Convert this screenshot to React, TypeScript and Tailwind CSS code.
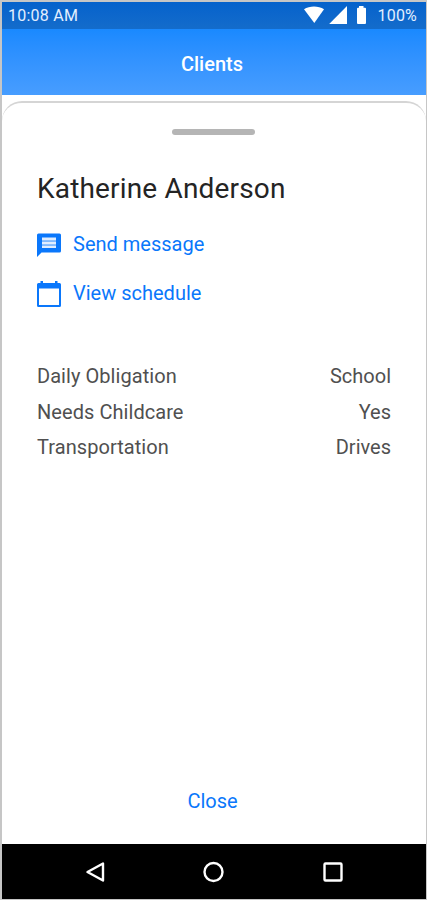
import React from "react";

const details = [
  { label: "Daily Obligation", value: "School" },
  { label: "Needs Childcare", value: "Yes" },
  { label: "Transportation", value: "Drives" },
];

function StatusBar() {
  return (
    <div className="flex h-[27px] items-center justify-between bg-linear-to-b from-[#0562cc] to-[#146ccb] pr-[9px] pl-[6px] text-[16px] leading-[27px] text-[#e3efff]">
      <span className="tracking-[0.25px]">10:08 AM</span>
      <div className="flex items-center">
        <svg width="63" height="20" viewBox="0 0 63 20" fill="#fff" className="mb-[2px]">
          <path d="M0 4.2C5.5 0.6 14.5 0.6 20 4.2L10.3 18Z" />
          <path d="M43 1V19H25.2Z" />
          <path d="M55 1h4.500v1.800h1.500Q62 2.800 62 3.800V18Q62 19 61 19H54Q53 19 53 18V3.800Q53 2.800 54 2.800H55Z" />
        </svg>
        <span className="ml-[11px] tracking-[0.2px]">100%</span>
      </div>
    </div>
  );
}

function MessageIcon() {
  return (
    <svg width="24" height="24" viewBox="0 0 24 24" fill="#0a77fb">
      <path d="M1.500 0.500H22.500Q24 0.500 24 2V18Q24 19.500 22.500 19.500H4.500L0 24V2Q0 0.500 1.500 0.500Z" />
      <path d="M5 4.500H19V7H5ZM5 8.500H19V11H5ZM5 12.500H19V15H5Z" fill="#e0edff" />
      <path d="M5 7H19V8.500H5ZM5 11H19V12.500H5Z" fill="#8fc0fd" />
    </svg>
  );
}

function CalendarIcon() {
  return (
    <svg width="24" height="26" viewBox="0 0 24 26" fill="#0a77fb">
      <path
        fillRule="evenodd"
        d="M3.500 0h2.500v2h12V0h2.500v2H22.500Q24 2 24 3.500V24.500Q24 26 22.500 26H1.500Q0 26 0 24.500V3.500Q0 2 1.500 2H3.500ZM2 7.500V24H22V7.500Z"
      />
    </svg>
  );
}

export default function App() {
  return (
    <div className="flex h-[900px] w-[427px] flex-col border-t-2 border-r border-b border-l-2 border-[#c6c6c6] bg-white font-['Roboto','Liberation_Sans',sans-serif]">
      <StatusBar />
      <header className="flex h-[66px] items-center justify-center bg-linear-to-b from-[#1989ff] to-[#479dff] pt-1 pr-[4px] text-[20px] font-medium text-white">
        Clients
      </header>
      <main className="mt-[6px] flex flex-1 flex-col rounded-t-[20px] border-t-2 border-[#d5d5d5] pr-[35px] pl-[35px]">
        <div className="mt-[26px] mr-px h-[6px] w-[83px] self-center rounded-full bg-[#b5b5b5]" />
        <h1 className="mt-[36px] text-[28px] leading-[36px] tracking-[0.17px] text-[#242424]">Katherine Anderson</h1>
        <a className="mt-[26px] flex h-[24px] items-center gap-[12px] text-[20px] leading-[24px] text-[#0a77fb]">
          <MessageIcon />
          <span className="relative -top-px">Send message</span>
        </a>
        <a className="mt-[24px] flex h-[26px] items-center gap-[12px] text-[20px] leading-[24px] text-[#0a77fb]">
          <CalendarIcon />
          <span className="relative -top-px">View schedule</span>
        </a>
        <dl className="mt-[52px] text-[20px] leading-[35.5px] text-[#505050]">
          {details.map((d) => (
            <div key={d.label} className="flex justify-between">
              <dt className="tracking-[0.06px]">{d.label}</dt>
              <dd>{d.value}</dd>
            </div>
          ))}
        </dl>
        <button className="mt-auto mb-[31px] self-center pr-[3px] text-[20px] leading-[24px] text-[#0a77fb]">Close</button>
      </main>
      <nav className="flex h-[55px] items-center justify-center bg-black">
        <svg width="260" height="24" viewBox="0 0 260 24" fill="none" stroke="#fff" strokeWidth="2.400" strokeLinejoin="round">
          <path d="M19 3.500V20.500L3.500 12Z" />
          <circle cx="129.500" cy="12" r="9" />
          <rect x="240.500" y="3.500" width="17" height="17" rx="1" />
        </svg>
      </nav>
    </div>
  );
}
